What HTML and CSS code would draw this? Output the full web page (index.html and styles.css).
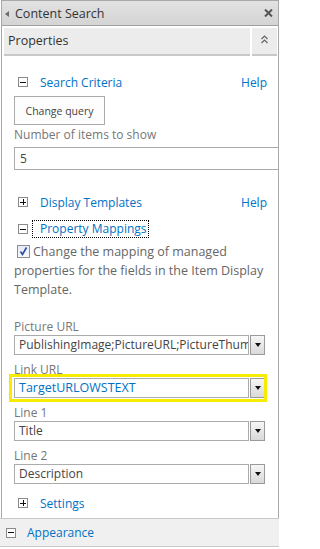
FILE: index.html
```html
<!DOCTYPE html>
<html>
<head>
<meta charset="utf-8">
<link rel="stylesheet" href="styles.css">
</head>
<body>
<div class="panel">
  <div class="titlebar">
    <span class="tri"></span>
    <span class="title">Content Search</span>
    <svg class="close" width="9" height="8" viewBox="0 0 9 8"><path d="M1 0.5 L8 7.5 M8 0.5 L1 7.5" stroke="#555" stroke-width="2"/></svg>
  </div>
  <div class="propbar">
    <div class="prop-title">Properties</div>
    <div class="prop-btn">
      <svg width="7" height="9" viewBox="0 0 7 9"><path d="M0.5 4 L3.5 1 L6.5 4 M0.5 8 L3.5 5 L6.5 8" fill="none" stroke="#666" stroke-width="1.2"/></svg>
    </div>
  </div>
  <div class="content">
    <div class="sec-row first">
      <span class="tog"><span class="h"></span></span>
      <span class="link">Search Criteria</span>
      <span class="help">Help</span>
    </div>
    <div class="btn">Change query</div>
    <div class="label label-num">Number of items to show</div>
    <div class="textbox">5</div>
    <div class="sec-row display">
      <span class="tog"><span class="h"></span><span class="v"></span></span>
      <span class="link">Display Templates</span>
      <span class="help">Help</span>
    </div>
    <div class="sec-row prop">
      <span class="tog"><span class="h"></span></span>
      <span class="link focus">Property Mappings</span>
    </div>
    <div class="check-text">
      <span class="checkbox"><svg width="11" height="11" viewBox="0 0 11 11"><path d="M2.5 5.5 L4.5 8.5 L8.5 1.5" fill="none" stroke="#2b4aa8" stroke-width="1.6"/></svg></span>Change the mapping of managed properties for the fields in the Item Display Template.
    </div>
    <div class="field first-field">
      <div class="label">Picture URL</div>
      <div class="select"><span class="val clip">PublishingImage;PictureURL;PictureThumbnailURL</span><span class="arrow"></span></div>
    </div>
    <div class="field">
      <div class="label">Link URL</div>
      <div class="select highlighted"><span class="val blue">TargetURLOWSTEXT</span><span class="arrow"></span><span class="mark"></span></div>
    </div>
    <div class="field">
      <div class="label">Line 1</div>
      <div class="select"><span class="val">Title</span><span class="arrow"></span></div>
    </div>
    <div class="field">
      <div class="label">Line 2</div>
      <div class="select"><span class="val">Description</span><span class="arrow"></span></div>
    </div>
    <div class="sec-row settings">
      <span class="tog"><span class="h"></span><span class="v"></span></span>
      <span class="link">Settings</span>
    </div>
  </div>
  <div class="appearance">
    <span class="tog"><span class="h"></span></span>
    <span class="link">Appearance</span>
  </div>
</div>
</body>
</html>
```

FILE: styles.css
```css
* { box-sizing: border-box; }
html, body {
  margin: 0;
  padding: 0;
  background: #fff;
}
body {
  width: 281px;
  height: 549px;
  overflow: hidden;
  font-family: "Open Sans", "Noto Sans", sans-serif;
  font-size: 12px;
  color: #444;
}
.panel {
  margin-left: 1px;
  width: 278px;
  border-left: 1px solid #a8a8a8;
  border-right: 1px solid #a8a8a8;
  border-top: 1px solid #a8a8a8;
}
.titlebar {
  height: 25px;
  display: flex;
  align-items: center;
  background: linear-gradient(#e2e2e2, #d4d4d4);
  border-bottom: 1px solid #a0a0a0;
  padding: 1px 0 0 3px;
}
.tri {
  width: 0;
  height: 0;
  border-right: 4px solid #6a6a6a;
  border-top: 3.5px solid transparent;
  border-bottom: 3.5px solid transparent;
  margin-right: 6px;
}
.title {
  font-size: 12.5px;
  color: #333;
  flex: 1;
}
.close {
  margin-right: 5px;
  margin-top: -1px;
}
.propbar {
  display: flex;
  margin: 2px 1px 0 2px;
  gap: 2px;
}
.prop-title {
  flex: 1;
  height: 28px;
  background: #ececec;
  border-bottom: 2px solid #c8c8c8;
  padding-left: 4px;
  line-height: 26px;
  font-size: 12.5px;
  color: #333;
}
.prop-btn {
  width: 25px;
  height: 28px;
  background: #ececec;
  border-bottom: 2px solid #c8c8c8;
  display: flex;
  align-items: center;
  justify-content: center;
  padding-bottom: 3px;
}
.content {
  padding-left: 12px;
}
.sec-row {
  display: flex;
  align-items: center;
  height: 20px;
  padding-left: 4px;
}
.sec-row.first { margin-top: 16px; }
.sec-row.display { margin-top: 22px; }
.sec-row.prop { margin-top: 7px; }
.sec-row.settings { margin-top: 9px; }
.tog {
  position: relative;
  width: 10px;
  height: 10px;
  border: 1px solid #8a8a8a;
  background: #fff;
  margin-right: 12px;
  flex: none;
}
.tog .h {
  position: absolute;
  left: 1px;
  top: 3.5px;
  width: 6px;
  height: 1px;
  background: #111;
}
.tog .v {
  position: absolute;
  left: 3.5px;
  top: 1px;
  width: 1px;
  height: 6px;
  background: #111;
}
.link {
  color: #0072c6;
  font-size: 12px;
}
.help {
  margin-left: auto;
  margin-right: 11px;
  color: #0072c6;
  font-size: 12px;
}
.focus {
  border: 1px dotted #000;
  line-height: 16px;
  padding: 0 1px 0 7px;
  margin-left: -8px;
}
.btn {
  margin-top: 4px;
  width: 91px;
  height: 29px;
  border: 1px solid #ababab;
  background: #fdfdfd;
  font-size: 10.5px;
  color: #444;
  display: flex;
  align-items: center;
  justify-content: center;
}
.label {
  color: #777;
  font-size: 12px;
  line-height: 17px;
}
.label-num {
  margin-top: 1px;
  line-height: 18px;
}
.textbox {
  margin-top: 3px;
  width: 264px;
  height: 23px;
  border: 1px solid #ababab;
  border-right: none;
  padding-left: 5px;
  line-height: 21px;
  font-size: 12px;
  color: #444;
}
.check-text {
  margin-top: 3px;
  font-size: 12.5px;
  line-height: 19px;
  color: #666;
  padding-right: 10px;
}
.checkbox {
  display: inline-block;
  vertical-align: -2px;
  width: 13px;
  height: 13px;
  border: 1px solid #8e8f8f;
  background: linear-gradient(#e6ecf5, #f6f8fb);
  margin: 0 3px 0 3px;
  position: relative;
}
.checkbox svg {
  position: absolute;
  left: 0;
  top: 0;
}
.field { margin-top: 6px; }
.field.first-field { margin-top: 19px; }
.select {
  position: relative;
  display: flex;
  width: 251px;
  height: 20px;
}
.val {
  flex: 1;
  border: 1px solid #ababab;
  padding-left: 4px;
  line-height: 18px;
  font-size: 12px;
  color: #444;
  white-space: nowrap;
  overflow: hidden;
}
.val.blue {
  color: #0072c6;
  font-size: 12.5px;
}
.arrow {
  width: 15px;
  margin-left: 1px;
  border: 1px solid #9a9a9a;
  background: linear-gradient(#f6f6f6, #d9d9d9);
  display: flex;
  align-items: center;
  justify-content: center;
}
.arrow::after {
  content: "";
  width: 0;
  height: 0;
  border-top: 4px solid #111;
  border-left: 3.5px solid transparent;
  border-right: 3.5px solid transparent;
}
.mark {
  position: absolute;
  left: -5px;
  top: -4px;
  right: -2px;
  bottom: -4px;
  border: 3px solid #f7ec00;
  pointer-events: none;
}
.appearance {
  margin-top: 5px;
  margin-left: -2px;
  width: 279px;
  height: 29px;
  border-top: 1px solid #c8c8c8;
  border-bottom: 1px solid #c8c8c8;
  background: #f0f0f0;
  display: flex;
  align-items: center;
  padding-left: 6px;
}
.appearance .tog { margin-right: 11px; }
```
